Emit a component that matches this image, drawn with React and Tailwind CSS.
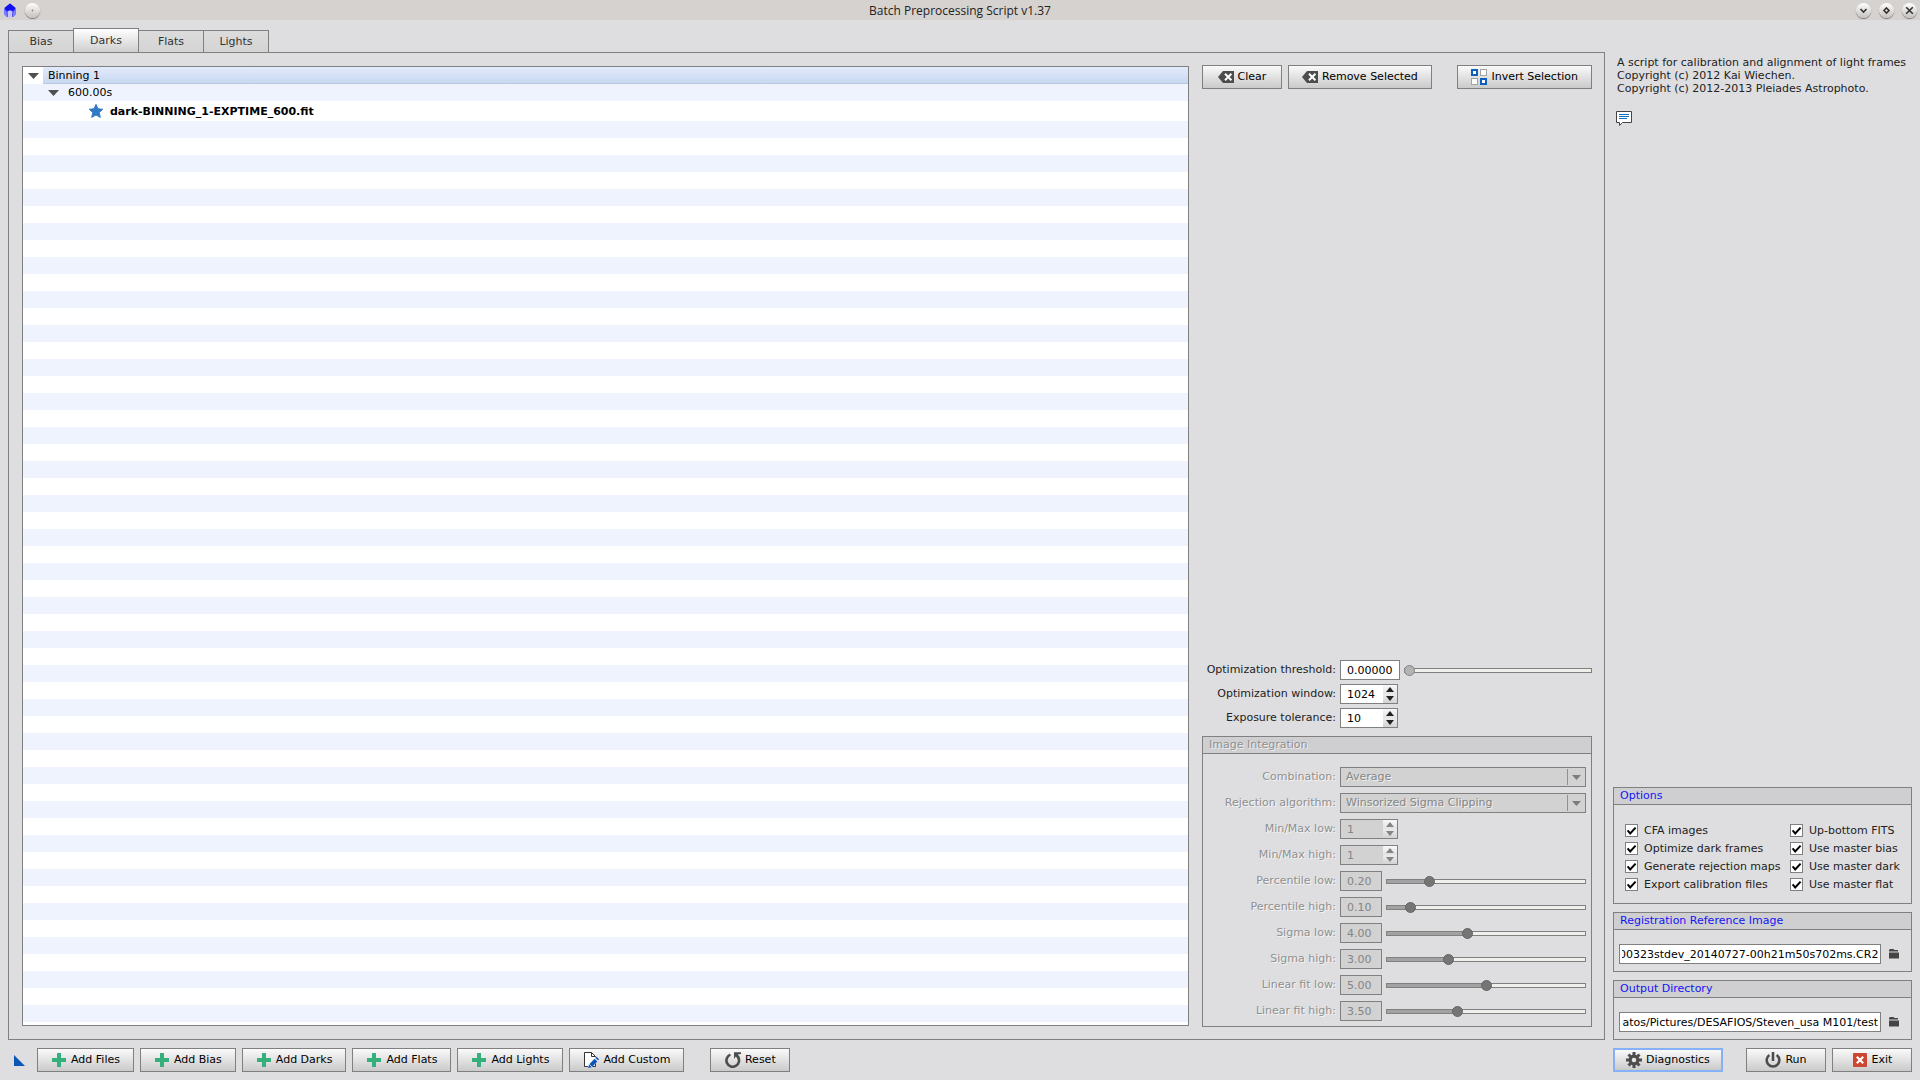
import React, { useEffect, useRef, useState } from 'react';
import clsx from 'clsx';

const TABS = ['Bias', 'Darks', 'Flats', 'Lights'];

const LEFT_OPTIONS = ['CFA images', 'Optimize dark frames', 'Generate rejection maps', 'Export calibration files'];
const RIGHT_OPTIONS = ['Up-bottom FITS', 'Use master bias', 'Use master dark', 'Use master flat'];

const REJECTION_SLIDERS = [
  { label: 'Percentile low:', value: '0.20', max: 1 },
  { label: 'Percentile high:', value: '0.10', max: 1 },
  { label: 'Sigma low:', value: '4.00', max: 10 },
  { label: 'Sigma high:', value: '3.00', max: 10 },
  { label: 'Linear fit low:', value: '5.00', max: 10 },
  { label: 'Linear fit high:', value: '3.50', max: 10 },
];

const toId = (label) => label.toLowerCase().replace(/[^a-z]+/g, '-');

/* Icons */

const AppIcon = () => (
  <svg width="14" height="15" viewBox="0 0 14 15" aria-hidden="true">
    <path d="M7 0.5 L12.5 5 L13 11 L10 14 H4 L1 11 L1.5 5 Z" fill="#3c3cff" />
    <path d="M7 0.5 L12.5 5 L10 8 L7 6.5 L4 8 L1.5 5 Z" fill="#1010f0" />
    <path d="M1.5 6 L3.6 9 L4.6 14 H4 L1 11 Z" fill="#7f7fff" />
    <path d="M12.5 6 L10.4 9 L9.4 14 H10 L13 11 Z" fill="#7f7fff" />
    <path d="M4.5 8.5 L7 7.5 L9.5 8.5 L8.8 14.5 H5.2 Z" fill="#c6c6ff" />
  </svg>
);

const ClearIcon = () => (
  <svg width="16" height="16" viewBox="0 0 16 16" aria-hidden="true">
    <path d="M0 8 L5 2 H16 V14 H5 Z" fill="#4d4d4d" />
    <path d="M7 4.8 L13.4 11.2 M13.4 4.8 L7 11.2" stroke="#fff" strokeWidth="2" />
  </svg>
);

const InvertIcon = () => (
  <svg width="16" height="16" viewBox="0 0 16 16" fill="#fff" aria-hidden="true">
    <rect x="1" y="1" width="5" height="5" stroke="#0f5fbe" strokeWidth="2" />
    <rect x="9.5" y="0.5" width="6" height="6" stroke="#a3a3a3" />
    <rect x="0.5" y="9.5" width="6" height="6" stroke="#a3a3a3" />
    <rect x="10" y="10" width="5" height="5" stroke="#0f5fbe" strokeWidth="2" />
  </svg>
);

const PlusIcon = () => (
  <svg width="16" height="16" viewBox="0 0 16 16" aria-hidden="true">
    <path d="M6 1 H10 V6 H15 V10 H10 V15 H6 V10 H1 V6 H6 Z" fill="#35b07d" />
  </svg>
);

const CustomIcon = () => (
  <svg width="16" height="16" viewBox="0 0 16 16" aria-hidden="true">
    <path d="M1.5 0.5 H8.5 L12.5 4.5 V14.5 H1.5 Z" fill="#fff" stroke="#333" />
    <path d="M8.5 0.5 V4.5 H12.5" fill="none" stroke="#333" />
    <path d="M4.6 15.8 L5.6 11.2 L12 4.8 L15.6 8.4 L9 15 Z" fill="#fff" />
    <path d="M5 16 L6 12.4 L11.6 6.8 L14.4 9.6 L8.8 15.2 Z" fill="#0f55b5" />
    <path d="M12.4 6 L13.6 4.8 L16 7.2 L15 8.6 Z" fill="#0f55b5" />
    <path d="M6.2 12.2 L9 15" stroke="#fff" strokeWidth="0.8" />
  </svg>
);

const ResetIcon = () => (
  <svg width="16" height="16" viewBox="0 0 16 16" aria-hidden="true">
    <path d="M5.4 2.6 A6.3 6.3 0 1 0 13 5" fill="none" stroke="#4d4d4d" strokeWidth="2.6" />
    <path d="M9 0.3 H16 V2 L12.8 2.4 L14.8 5 L12.6 6.8 L10.8 4.4 L9 7 Z" fill="#4d4d4d" />
  </svg>
);

const GearIcon = () => (
  <svg width="16" height="16" viewBox="0 0 16 16" aria-hidden="true">
    <g stroke="#4d4d4d" strokeWidth="3">
      <path d="M8 0 V16 M0 8 H16 M2.5 2.5 L13.5 13.5 M13.5 2.5 L2.5 13.5" />
    </g>
    <circle cx="8" cy="8" r="5.4" fill="#4d4d4d" />
    <circle cx="8" cy="8" r="2.3" fill="#e4e4e4" />
  </svg>
);

const PowerIcon = () => (
  <svg width="16" height="16" viewBox="0 0 16 16" fill="none" stroke="#4d4d4d" aria-hidden="true">
    <path d="M4.4 3 A6.3 6.3 0 1 0 11.6 3" strokeWidth="2.6" />
    <path d="M8 0 V9" strokeWidth="2.6" />
  </svg>
);

const ExitIcon = () => (
  <svg width="16" height="16" viewBox="0 0 16 16" aria-hidden="true">
    <rect x="1" y="1" width="14" height="14" rx="1" fill="#cc4631" />
    <path d="M4.8 4.8 L11.2 11.2 M11.2 4.8 L4.8 11.2" stroke="#fff" strokeWidth="2.2" />
  </svg>
);

const FolderIcon = () => (
  <svg width="12" height="12" viewBox="0 0 12 12" fill="#454545" aria-hidden="true">
    <path d="M1 2 L2 1 H5.5 L6.5 2 H10 V3.5 H1 Z" />
    <path d="M1 4.5 H11 V10.5 H1 Z" />
  </svg>
);

const StarIcon = () => (
  <svg width="16" height="16" viewBox="0 0 16 16" aria-hidden="true">
    <path
      d="M8 1.4 L10 5.8 L14.8 6.3 L11.2 9.5 L12.3 14.4 L8 11.9 L3.7 14.4 L4.8 9.5 L1.2 6.3 L6 5.8 Z"
      fill="#3279c6"
      stroke="#3279c6"
      strokeLinejoin="round"
    />
  </svg>
);

const CommentIcon = () => (
  <svg width="16" height="16" viewBox="0 0 16 16" aria-hidden="true">
    <path d="M0.5 0.5 H15.5 V11.5 H6.5 L3.5 14.5 V11.5 H0.5 Z" fill="#fff" stroke="#444" />
    <path d="M3 3.5 H13 M3 5.5 H13 M3 7.5 H11" stroke="#0f6fc6" />
  </svg>
);

const DownArrow = () => (
  <svg width="11" height="6" viewBox="0 0 11 6" aria-hidden="true">
    <path d="M0 0 H11 L5.5 6 Z" fill="#505050" />
  </svg>
);

/* Controls */

const RoundButton = ({ label, children }) => (
  <button
    aria-label={label}
    className="grid h-[15px] w-[15px] place-items-center rounded-full bg-linear-to-b from-white to-[#c4c1be] shadow-[0_1px_1px_#777]"
  >
    <svg width="9" height="9" viewBox="0 0 9 9" fill="none" stroke="#333" strokeWidth="1.6" aria-hidden="true">
      {children}
    </svg>
  </button>
);

const PushButton = ({ icon, children, focused }) => (
  <button
    className={clsx(
      'flex h-6 min-w-20 items-center justify-center gap-1 bg-linear-to-b from-[#fafafa] to-[#cacaca] whitespace-nowrap text-black',
      focused ? 'border-2 border-[#86b0f8] px-[11px]' : 'border border-[#808080] px-[13px]'
    )}
  >
    {icon}
    <span className="pb-[2px]">{children}</span>
  </button>
);

const FormRow = ({ label, disabled, children }) => (
  <div className="flex h-5 items-center gap-1">
    <label
      htmlFor={toId(label)}
      className={clsx(
        'shrink-0 pb-[2px] text-right',
        disabled ? 'w-[128px] text-[#909090] [text-shadow:1px_1px_0_#f4f4f4]' : 'w-[134px]'
      )}
    >
      {label}
    </label>
    {children}
  </div>
);

const Edit = ({ id, value, disabled, className }) => (
  <input
    id={id}
    type="text"
    defaultValue={value}
    disabled={disabled}
    className={clsx(
      'h-5 shrink-0 border border-[#808080] px-[6px] outline-none',
      disabled ? 'bg-[#d2d2d2] text-[#858585]' : 'bg-white text-black',
      className
    )}
  />
);

const SpinBox = ({ id, value, disabled }) => {
  const [count, setCount] = useState(value);
  const fill = disabled ? '#858585' : '#222';
  return (
    <div className={clsx('flex h-5 w-[58px] border border-[#808080]', disabled ? 'bg-[#d2d2d2]' : 'bg-white')}>
      <input
        id={id}
        type="text"
        value={count}
        disabled={disabled}
        onChange={(e) => setCount(Number(e.target.value) || 0)}
        className={clsx('min-w-0 flex-1 pl-[6px] outline-none', disabled ? 'text-[#858585]' : 'text-black')}
      />
      <div className="flex w-[14px] flex-col">
        <button
          aria-label="Increase"
          disabled={disabled}
          onClick={() => setCount(count + 1)}
          className="grid flex-1 place-items-center bg-linear-to-b from-[#f8f8f8] to-[#e2e2e2]"
        >
          <svg width="8" height="5" viewBox="0 0 8 5" aria-hidden="true">
            <path d="M0 5 L4 0 L8 5 Z" fill={fill} />
          </svg>
        </button>
        <button
          aria-label="Decrease"
          disabled={disabled}
          onClick={() => setCount(count - 1)}
          className="grid flex-1 place-items-center bg-linear-to-b from-[#ededed] to-[#d2d2d2]"
        >
          <svg width="8" height="5" viewBox="0 0 8 5" aria-hidden="true">
            <path d="M0 0 H8 L4 5 Z" fill={fill} />
          </svg>
        </button>
      </div>
    </div>
  );
};

const Slider = ({ label, value, max, disabled }) => {
  const [pos, setPos] = useState(value);
  const pct = (pos / max) * 100;
  return (
    <input
      type="range"
      aria-label={label}
      min="0"
      max={max}
      step={max / 1000}
      value={pos}
      disabled={disabled}
      onChange={(e) => setPos(Number(e.target.value))}
      style={{ backgroundImage: `linear-gradient(to right, #a2a2a2 ${pct}%, #efefec ${pct}%)` }}
      className={clsx(
        'h-[5px] min-w-0 flex-1 appearance-none ring-1 ring-[#808080] ring-inset [&::-webkit-slider-runnable-track]:h-[5px] [&::-webkit-slider-thumb]:-mt-[3px] [&::-webkit-slider-thumb]:h-[11px] [&::-webkit-slider-thumb]:w-[11px] [&::-webkit-slider-thumb]:appearance-none [&::-webkit-slider-thumb]:rounded-full [&::-webkit-slider-thumb]:border',
        disabled
          ? '[&::-webkit-slider-thumb]:border-[#666] [&::-webkit-slider-thumb]:bg-[#757575]'
          : '[&::-webkit-slider-thumb]:border-[#848484] [&::-webkit-slider-thumb]:bg-[#b4b4b4]'
      )}
    />
  );
};

const Combo = ({ id, value }) => (
  <div className="grid h-5 flex-1 border border-[#808080] bg-[#d2d2d2]">
    <select
      id={id}
      disabled
      className="col-start-1 row-start-1 appearance-none pr-5 pb-[2px] pl-[5px] text-[#858585] opacity-100 [text-shadow:1px_1px_0_#f0f0f0]"
    >
      <option>{value}</option>
    </select>
    <span className="pointer-events-none col-start-1 row-start-1 my-px grid w-[18px] place-items-center justify-self-end border-l border-[#909090]">
      <svg width="9" height="5" viewBox="0 0 9 5" aria-hidden="true">
        <path d="M0 0 H9 L4.5 5 Z" fill="#7c7c7c" />
      </svg>
    </span>
  </div>
);

const CheckBox = ({ label }) => (
  <label className="flex h-[18px] items-center gap-[6px] whitespace-nowrap">
    <span className="grid">
      <input
        type="checkbox"
        defaultChecked
        className="peer col-start-1 row-start-1 h-[13px] w-[13px] appearance-none border border-[#808080] bg-white"
      />
      <svg
        width="13"
        height="13"
        viewBox="0 0 13 13"
        className="pointer-events-none invisible col-start-1 row-start-1 peer-checked:visible"
        aria-hidden="true"
      >
        <path d="M2.6 6.4 L5.2 9.4 L10.6 3.6" fill="none" stroke="#000" strokeWidth="2" />
      </svg>
    </span>
    {label}
  </label>
);

const GroupBox = ({ title, disabled, className, children }) => (
  <section className="border border-[#808080]">
    <h2
      className={clsx(
        'h-[17px] border-b border-[#808080] bg-[#cfcfd1] pl-[6px] leading-[15px]',
        disabled ? 'text-[#909090] [text-shadow:1px_1px_0_#f0f0f0]' : 'text-[#1414f5]'
      )}
    >
      {title}
    </h2>
    <div className={className}>{children}</div>
  </section>
);

// Long paths stay scrolled to their end, so the file name is what shows
const PathField = ({ label, value }) => {
  const ref = useRef(null);
  useEffect(() => {
    ref.current.scrollLeft = ref.current.scrollWidth;
  }, []);
  return (
    <div className="flex items-center">
      <input
        ref={ref}
        type="text"
        aria-label={label}
        defaultValue={value}
        className="h-5 min-w-0 flex-1 border border-[#808080] bg-white px-[2px] text-black outline-none"
      />
      <button aria-label={`Select ${label}`} className="grid h-5 w-[25px] place-items-center">
        <FolderIcon />
      </button>
    </div>
  );
};

/* Sections */

const TitleBar = () => (
  <header className="grid h-5 grid-cols-[1fr_auto_1fr] items-center bg-[#d6d2cf] px-[3px]">
    <div className="flex items-center gap-2">
      <AppIcon />
      <RoundButton label="Window menu">
        <circle cx="4.5" cy="4.5" r="0.5" stroke="#777" strokeWidth="1" />
      </RoundButton>
    </div>
    <h1 className="pt-px font-['Open_Sans','Noto_Sans',sans-serif] text-[12px] leading-5 text-[#222]">
      Batch Preprocessing Script v1.37
    </h1>
    <div className="flex justify-end gap-2">
      <RoundButton label="Minimize">
        <path d="M1.5 3 L4.5 6 L7.5 3" />
      </RoundButton>
      <RoundButton label="Maximize">
        <path d="M4.5 2 L7 4.5 L4.5 7 L2 4.5 Z" />
      </RoundButton>
      <RoundButton label="Close">
        <path d="M1.2 1.2 L7.8 7.8 M7.8 1.2 L1.2 7.8" />
      </RoundButton>
    </div>
  </header>
);

const FileTree = () => (
  <div role="tree" className="m-px flex min-w-0 flex-1 flex-col border border-[#808080] bg-white leading-[17px] text-black">
    <div role="treeitem" aria-expanded="true" className="flex h-[17px]">
      <span className="grid w-5 place-items-center">
        <DownArrow />
      </span>
      <span className="flex-1 border-b border-[#b9c9e2] bg-linear-to-b from-[#e2ebfa] to-[#c8d8f1] pl-[5px]">
        Binning 1
      </span>
    </div>
    <div role="treeitem" aria-expanded="true" className="flex h-[17px] bg-[#eff3fe] pl-5">
      <span className="grid w-5 place-items-center">
        <DownArrow />
      </span>
      <span className="pl-[5px]">600.00s</span>
    </div>
    <div role="treeitem" className="flex h-5 items-center gap-[6px] pl-[65px] font-bold">
      <StarIcon />
      <span>dark-BINNING_1-EXPTIME_600.fit</span>
    </div>
    <div className="flex-1 bg-[repeating-linear-gradient(to_bottom,#eff3fe_0_17px,#fff_17px_34px)]" />
  </div>
);

const DarksControls = () => (
  <div className="flex w-[390px] shrink-0 flex-col">
    <div className="flex gap-[6px]">
      <PushButton icon={<ClearIcon />}>Clear</PushButton>
      <PushButton icon={<ClearIcon />}>Remove Selected</PushButton>
      <span className="flex-1" />
      <PushButton icon={<InvertIcon />}>Invert Selection</PushButton>
    </div>

    <div className="mt-auto mb-2 flex flex-col gap-1">
      <FormRow label="Optimization threshold:">
        <Edit id="optimization-threshold-" value="0.00000" className="w-[60px]" />
        <Slider label="Optimization threshold" value={0} max={10} />
      </FormRow>
      <FormRow label="Optimization window:">
        <SpinBox id="optimization-window-" value={1024} />
      </FormRow>
      <FormRow label="Exposure tolerance:">
        <SpinBox id="exposure-tolerance-" value={10} />
      </FormRow>
    </div>

    <GroupBox title="Image Integration" disabled className="flex flex-col gap-[6px] px-[5px] pt-[13px] pb-[5px]">
      <FormRow label="Combination:" disabled>
        <Combo id="combination-" value="Average" />
      </FormRow>
      <FormRow label="Rejection algorithm:" disabled>
        <Combo id="rejection-algorithm-" value="Winsorized Sigma Clipping" />
      </FormRow>
      <FormRow label="Min/Max low:" disabled>
        <SpinBox id="min-max-low-" value={1} disabled />
      </FormRow>
      <FormRow label="Min/Max high:" disabled>
        <SpinBox id="min-max-high-" value={1} disabled />
      </FormRow>
      {REJECTION_SLIDERS.map(({ label, value, max }) => (
        <FormRow key={label} label={label} disabled>
          <Edit id={toId(label)} value={value} disabled className="w-[42px]" />
          <Slider label={label} value={Number(value)} max={max} disabled />
        </FormRow>
      ))}
    </GroupBox>
  </div>
);

const BottomBar = () => (
  <div className="mt-2 flex items-center gap-[6px] pl-[6px]">
    <svg width="11" height="11" viewBox="0 0 11 11" className="mr-[6px]" aria-hidden="true">
      <path d="M0 0 L11 11 H0 Z" fill="#0b57b4" />
    </svg>
    <PushButton icon={<PlusIcon />}>Add Files</PushButton>
    <PushButton icon={<PlusIcon />}>Add Bias</PushButton>
    <PushButton icon={<PlusIcon />}>Add Darks</PushButton>
    <PushButton icon={<PlusIcon />}>Add Flats</PushButton>
    <PushButton icon={<PlusIcon />}>Add Lights</PushButton>
    <PushButton icon={<CustomIcon />}>Add Custom</PushButton>
    <span className="w-[14px]" />
    <PushButton icon={<ResetIcon />}>Reset</PushButton>
  </div>
);

const Sidebar = () => (
  <aside className="flex w-[299px] shrink-0 flex-col">
    <div className="pt-7 pl-1 leading-[13px]">
      <p>A script for calibration and alignment of light frames</p>
      <p>Copyright (c) 2012 Kai Wiechen.</p>
      <p>Copyright (c) 2012-2013 Pleiades Astrophoto.</p>
    </div>
    <button aria-label="Documentation" className="mt-4 ml-[3px] self-start">
      <CommentIcon />
    </button>

    <div className="mt-auto flex flex-col gap-2">
      <GroupBox title="Options" className="grid grid-cols-[165px_1fr] pt-4 pb-[10px] pl-[11px]">
        <div>
          {LEFT_OPTIONS.map((label) => (
            <CheckBox key={label} label={label} />
          ))}
        </div>
        <div>
          {RIGHT_OPTIONS.map((label) => (
            <CheckBox key={label} label={label} />
          ))}
        </div>
      </GroupBox>
      <GroupBox title="Registration Reference Image" className="px-[5px] pt-[14px] pb-[7px]">
        <PathField label="Registration Reference Image" value="00323stdev_20140727-00h21m50s702ms.CR2" />
      </GroupBox>
      <GroupBox title="Output Directory" className="px-[5px] pt-[14px] pb-[7px]">
        <PathField label="Output Directory" value="Datos/Pictures/DESAFIOS/Steven_usa M101/test" />
      </GroupBox>
      <div className="flex gap-[6px]">
        <PushButton icon={<GearIcon />} focused>
          Diagnostics
        </PushButton>
        <span className="flex-1" />
        <PushButton icon={<PowerIcon />}>Run</PushButton>
        <PushButton icon={<ExitIcon />}>Exit</PushButton>
      </div>
    </div>
  </aside>
);

export default function App() {
  const [active, setActive] = useState('Darks');

  return (
    <div className="flex min-h-screen flex-col bg-[#dedee0] font-['DejaVu_Sans',sans-serif] text-[11px] leading-[13px] text-[#222]">
      <TitleBar />
      <div className="flex flex-1 gap-2 p-2">
        <main className="flex min-w-0 flex-1 flex-col">
          <div role="tablist" className="flex items-end">
            {TABS.map((tab) => (
              <button
                key={tab}
                role="tab"
                aria-selected={tab === active}
                onClick={() => setActive(tab)}
                className={clsx(
                  '-mr-px w-[66px] border border-b-0 border-[#808080] text-[#333]',
                  tab === active
                    ? 'h-6 bg-linear-to-b from-white to-[#cfcfcf]'
                    : 'h-[22px] bg-linear-to-b from-[#dcdcdd] to-[#d4d4d4]'
                )}
              >
                {tab}
              </button>
            ))}
          </div>
          <div role="tabpanel" className="flex flex-1 gap-3 border border-[#808080] p-3">
            <FileTree />
            <DarksControls />
          </div>
          <BottomBar />
        </main>
        <Sidebar />
      </div>
    </div>
  );
}
